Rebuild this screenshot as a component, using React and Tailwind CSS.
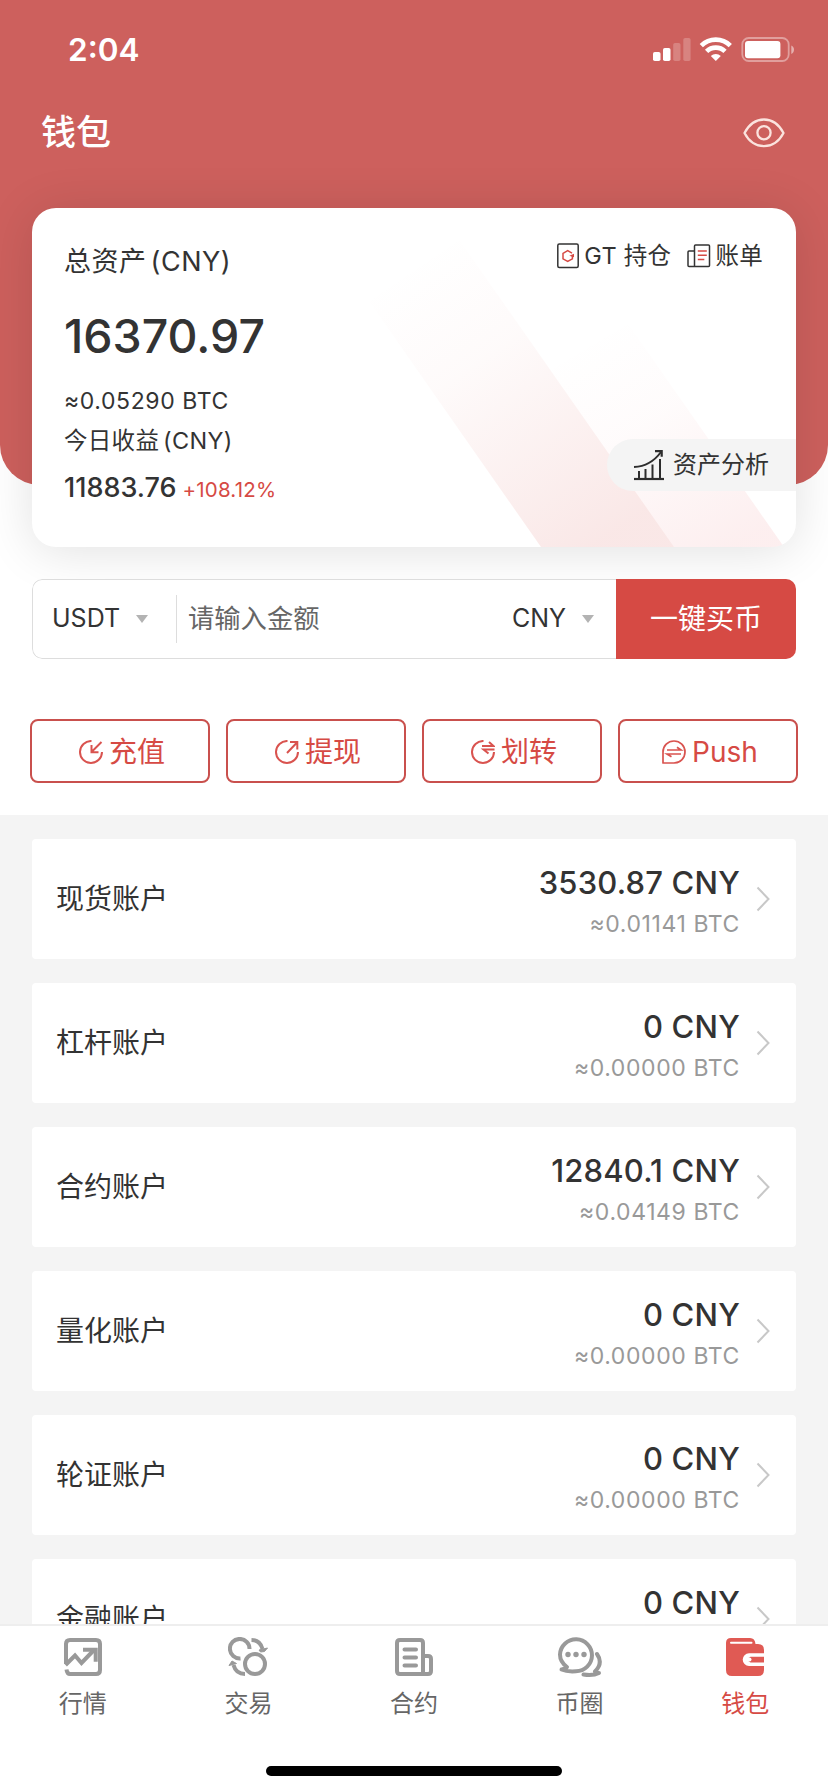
const accounts = [
  { name: '现货账户', value: '3530.87', btc: '0.01141' },
  { name: '杠杆账户', value: '0', btc: '0.00000' },
  { name: '合约账户', value: '12840.1', btc: '0.04149' },
  { name: '量化账户', value: '0', btc: '0.00000' },
  { name: '轮证账户', value: '0', btc: '0.00000' },
  { name: '金融账户', value: '0', btc: '0.00000' },
];

function StatusIcons() {
  return (
    <svg width="142" height="26" viewBox="0 0 142 26" fill="#fff">
      <rect x="0" y="15" width="7.5" height="9" rx="1.8" />
      <rect x="10" y="11" width="7.5" height="13" rx="1.8" />
      <rect x="20.2" y="6" width="7.3" height="18" rx="1.8" opacity="0.22" />
      <rect x="30.3" y="1" width="7.3" height="23" rx="1.8" opacity="0.22" />
      <g fill="none" stroke="#fff" strokeWidth="4.6">
        <path d="M48.3 8.6a20.5 20.5 0 0 1 29 0" />
        <path d="M53.6 14.4a13 13 0 0 1 18.4 0" />
      </g>
      <path d="M62.8 24l-5-5a7.2 7.2 0 0 1 10 0z" />
      <rect x="89.3" y="1" width="46.4" height="23" rx="6.5" fill="none" stroke="#fff" strokeWidth="1.8" opacity="0.4" />
      <rect x="92" y="4" width="35.4" height="17.2" rx="3" />
      <path d="M138.3 8.5c3.6 1.2 3.6 7.2 0 8.4z" opacity="0.5" />
    </svg>
  );
}

function EyeIcon() {
  return (
    <svg width="42" height="30" viewBox="0 0 42 30" fill="none" stroke="#fbe3de" strokeWidth="2.3">
      <path d="M1.5 15C6 6.5 13 1.5 21 1.5S36 6.5 40.5 15C36 23.5 29 28.2 21 28.2S6 23.5 1.5 15z" strokeLinejoin="round" />
      <circle cx="21" cy="14.7" r="6.6" />
    </svg>
  );
}

function HoldingIcon() {
  return (
    <svg width="22" height="26" viewBox="0 0 22 26" fill="none" strokeWidth="1.5">
      <rect x="0.8" y="1" width="20.4" height="23.6" rx="1.5" stroke="#333" />
      <path d="M15 10.2l-4.300-2.500-4.700 2.700v5.400l4.700 2.700 4.700-2.700v-2.800" stroke="#d64a44" />
      <path d="M12.300 12.800l4.700-2v3.500z" fill="#d64a44" />
    </svg>
  );
}

function BillIcon() {
  return (
    <svg width="24" height="24" viewBox="0 0 24 24" fill="none" strokeWidth="1.5">
      <path d="M7.5 22.5V2q0-1 1-1h13q1 0 1 1v19.5q0 1-1 1H2q-1 0-1-1V8q0-1 1-1h5.500" stroke="#333" />
      <path d="M10.8 7h9M10.8 11.300h9M10.8 15.600h6.500" stroke="#d64a44" />
    </svg>
  );
}

function AnalysisIcon() {
  return (
    <svg width="32" height="32" viewBox="0 0 32 32" fill="none" stroke="#2d2d2d" strokeWidth="2">
      <path d="M1 30h30" strokeWidth="2.2" />
      <path d="M6 22v8M12.5 20v10M19.5 15.5V30M27 10v20" />
      <path d="M1 18C12 17.5 21 12.5 28 3" />
      <path d="M22 2.200h6.700v5.500" strokeWidth="2.2" />
    </svg>
  );
}

function ActionIcon({ type }) {
  return (
    <svg width="24" height="24" viewBox="0 0 24 24" fill="none" stroke="#d9534f" strokeWidth="2">
      {type !== 'push' && <path d="M12.5 1A11 11 0 1 0 23 12" />}
      {type === 'deposit' && <path d="M22.5 2L12.5 12M12.5 5v7.200h7" />}
      {type === 'withdraw' && <path d="M12 13L22 2.500M15 2h7.300v7.500" />}
      {type === 'transfer' && <path d="M11 6h11.500l-4.500-4M23.500 9.500H12.500l5 4" />}
      {type === 'push' && (
        <g strokeWidth="1.7">
          <path d="M1 23V12A11 11 0 1 1 12 23z" strokeLinejoin="round" />
          <path d="M5 10h14l-4-2.800M19 14H5l4.500 2.800" />
        </g>
      )}
    </svg>
  );
}

function MarketIcon() {
  return (
    <svg width="40" height="40" viewBox="0 0 40 40" fill="none" stroke="#999" strokeWidth="4">
      <path d="M3 27V7q0-4 4-4h26q4 0 4 4v26q0 4-4 4H7q-3 0-3.500-4.500" />
      <path d="M2.500 28l9.500-9.500 6.500 7.500L31 13" />
      <path d="M20 12.700h12.700v12" />
    </svg>
  );
}

function TradeIcon() {
  return (
    <svg width="40" height="40" viewBox="0 0 40 40" fill="none" stroke="#999" strokeWidth="4">
      <path d="M12.500 21.500A9.800 9.800 0 1 1 21.500 12" />
      <circle cx="27" cy="27" r="10" />
      <path d="M23.500 2.900C29 3 33 6.500 34.500 12M17 37C11 37 7 33.500 5.500 28" />
      <path d="M31 13l8.500-2-3 3.500-4 .5zM8.500 26.500L1 28.500l3-4.500z" fill="#999" strokeWidth="1" />
    </svg>
  );
}

function ContractIcon() {
  return (
    <svg width="40" height="40" viewBox="0 0 40 40" fill="none" stroke="#999" strokeWidth="4">
      <path d="M29 37V6q0-3-3-3H6Q3 3 3 6v28q0 3 3 3h28q3 0 3-3V22q0-3-3-3h-5" />
      <path d="M10.500 12.500h11.500M10.500 20.500h11.500M10.500 28.500h11.500" strokeLinecap="round" />
    </svg>
  );
}

function CommunityIcon() {
  return (
    <svg width="46" height="42" viewBox="0 0 46 42" fill="none" stroke="#999" strokeWidth="4" strokeLinecap="round" strokeLinejoin="round">
      <path d="M4.500 33.500q4-.5 5.500-2.500C4.500 27 3 23 3 18.500A16 16 0 1 1 19 35.300q-9 .7-14.500-1.800z" />
      <path d="M40 18c5 7 2.500 13-2 17.500q1.500 1.500 4 1.500-6 3-15.500 1.500" />
      <g fill="#999" stroke="none">
        <circle cx="11" cy="18.500" r="2.700" />
        <circle cx="19" cy="18.500" r="2.700" />
        <circle cx="27" cy="18.500" r="2.700" />
      </g>
    </svg>
  );
}

function WalletIcon() {
  return (
    <svg width="40" height="40" viewBox="0 0 40 40" fill="#e05a54">
      <path d="M6 1h19q5 0 5.500 6H33q6 0 6 6v20q0 6-6 6H7q-6 0-6-6V6q0-5 5-5z" />
      <path d="M39.500 16.300H24a6.300 6.300 0 0 0 0 12.600h15.500v-3.400H25.500a3 3 0 0 1 0-5.800h14z" fill="#fff" />
      <path d="M6 5.800h20.500" stroke="#fff" strokeWidth="2" strokeLinecap="round" />
      <circle cx="24.500" cy="22.600" r="2" fill="#fff" />
    </svg>
  );
}

const actions = [
  { type: 'deposit', label: '充值' },
  { type: 'withdraw', label: '提现' },
  { type: 'transfer', label: '划转' },
  { type: 'push', label: 'Push' },
];

const tabs = [
  { label: '行情', icon: MarketIcon },
  { label: '交易', icon: TradeIcon },
  { label: '合约', icon: ContractIcon },
  { label: '币圈', icon: CommunityIcon },
  { label: '钱包', icon: WalletIcon, active: true },
];

function Caret() {
  return <span className="border-x-[6px] border-t-[8px] border-x-transparent border-t-[#b3b3b3]" />;
}

function AssetCard() {
  return (
    <section className="relative mx-8 -mt-[277px] h-[339px] shrink-0 overflow-hidden rounded-3xl bg-white pl-8 text-[#333] shadow-[0_4px_50px_rgba(0,0,0,0.12)]">
      <svg className="absolute top-0 left-0" width="764" height="339" viewBox="0 0 764 339">
        <defs>
          <linearGradient id="stripeA" gradientUnits="userSpaceOnUse" x1="370" y1="60" x2="560" y2="339">
            <stop offset="0" stopColor="#d64a44" stopOpacity="0" />
            <stop offset="0.35" stopColor="#d64a44" stopOpacity="0.025" />
            <stop offset="1" stopColor="#d64a44" stopOpacity="0.13" />
          </linearGradient>
          <linearGradient id="stripeB" gradientUnits="userSpaceOnUse" x1="570" y1="120" x2="700" y2="339">
            <stop offset="0" stopColor="#e64a50" stopOpacity="0" />
            <stop offset="0.4" stopColor="#e64a50" stopOpacity="0.02" />
            <stop offset="1" stopColor="#e64a50" stopOpacity="0.09" />
          </linearGradient>
        </defs>
        <path d="M509 339L272 0h133l237 339z" fill="url(#stripeA)" />
        <path d="M642 339L470 93h110l172 246z" fill="url(#stripeB)" />
      </svg>
      <div className="relative flex h-full flex-col">
        <div className="flex items-start justify-between pr-[33px]">
          <h2 className="mt-[34px] text-[27px] leading-10 tracking-[0.5px] [word-spacing:-4px]">总资产 (CNY)</h2>
          <div className="mt-7 flex text-[23.5px] leading-10 tracking-[0.3px]">
            <span className="mr-4 flex items-center gap-[5px]">
              <HoldingIcon />
              GT 持仓
            </span>
            <span className="flex items-center gap-1">
              <BillIcon />
              账单
            </span>
          </div>
        </div>
        <div className="mt-[24px] text-[46.5px] leading-[60px] font-medium">16370.97</div>
        <div className="mt-[15px] text-[23px] leading-10 tracking-[0.6px]">≈0.05290 BTC</div>
        <div className="text-[23.5px] leading-10 tracking-[0.3px] [word-spacing:-3px]">今日收益 (CNY)</div>
        <div className="mt-[7px] flex items-baseline gap-[6px] leading-10">
          <span className="text-[27px] font-medium">11883.76</span>
          <span className="text-[20.5px] text-[#d64a44] tracking-[0.2px]">+108.12%</span>
        </div>
      </div>
      <button className="absolute top-[231px] right-0 flex h-[52px] w-[189px] items-center rounded-l-full bg-[#f4f4f4] pl-[26px] text-2xl">
        <AnalysisIcon />
        <span className="ml-2">资产分析</span>
      </button>
    </section>
  );
}

function AccountRow({ account }) {
  return (
    <div className="flex h-[120px] shrink-0 items-center rounded bg-white pr-[26px] pl-6 text-[#333]">
      <span className="flex-1 text-[28px]">{account.name}</span>
      <div className="mr-4 flex flex-col pt-[5px] text-right">
        <span className="text-[31px] leading-[44px] font-medium tracking-[0.2px]">{account.value} CNY</span>
        <span className="text-[23px] leading-[38px] tracking-[0.6px] text-[#999]">≈{account.btc} BTC</span>
      </div>
      <svg width="14" height="26" viewBox="0 0 14 26" fill="none" stroke="#c8c8c8" strokeWidth="2">
        <path d="M1.5 1.5L12.5 13l-11 11.500" />
      </svg>
    </div>
  );
}

export default function App() {
  return (
    <div className="flex h-[1792px] w-[828px] flex-col overflow-hidden bg-white font-[Inter,'Noto_Sans_CJK_SC',sans-serif]">
      <header className="h-[485px] shrink-0 rounded-b-[40px] bg-[#cd605d] text-white">
        <div className="flex h-[99px] items-center justify-between pr-[33px] pl-[68px]">
          <span className="text-[31.5px] font-semibold">2:04</span>
          <StatusIcons />
        </div>
        <div className="flex h-[67px] items-center justify-between pr-[43px] pl-[41px]">
          <h1 className="text-[35px] font-medium">钱包</h1>
          <EyeIcon />
        </div>
      </header>

      <AssetCard />

      <div className="relative mx-8 mt-8 flex h-20 shrink-0 overflow-hidden rounded-[10px] bg-white text-[25px] text-[#333]">
        <div className="flex flex-1 items-center rounded-l-[10px] border border-r-0 border-[#ddd] pl-[19px]">
          <span className="w-[68px]">USDT</span>
          <span className="ml-4 flex"><Caret /></span>
          <span className="ml-7 h-12 w-px bg-[#ddd]" />
          <span className="ml-[11px] flex-1 text-[26.3px] text-[#666]">请输入金额</span>
          <span>CNY</span>
          <span className="mr-[22px] ml-4 flex"><Caret /></span>
        </div>
        <button className="w-[180px] bg-[#d64a44] text-[28px] text-white">一键买币</button>
      </div>

      <div className="mx-[30px] mt-[60px] mb-8 grid shrink-0 grid-cols-4 gap-4">
        {actions.map((action) => (
          <button
            key={action.type}
            className="flex h-16 items-center justify-center gap-[6px] rounded-lg border-2 border-[#c9504d] pt-px pl-1 text-[28px] text-[#d64a44]"
          >
            <ActionIcon type={action.type} />
            {action.label}
          </button>
        ))}
      </div>

      <main className="flex min-h-0 flex-1 flex-col gap-6 overflow-hidden bg-[#f4f4f4] px-8 pt-6">
        {accounts.map((account) => (
          <AccountRow key={account.name} account={account} />
        ))}
      </main>

      <nav className="flex h-[168px] shrink-0 flex-col items-center border-t-2 border-[#eee] bg-white">
        <div className="grid w-full grid-cols-5 pt-[10px]">
          {tabs.map((tab) => (
            <div key={tab.label} className="flex flex-col items-center">
              <div className="flex h-[42px] items-center"><tab.icon /></div>
              <span className={`mt-[10px] text-2xl ${tab.active ? 'text-[#d64a44]' : 'text-[#666]'}`}>{tab.label}</span>
            </div>
          ))}
        </div>
        <div className="mt-auto mb-4 h-[10px] w-[296px] rounded-full bg-black" />
      </nav>
    </div>
  );
}
